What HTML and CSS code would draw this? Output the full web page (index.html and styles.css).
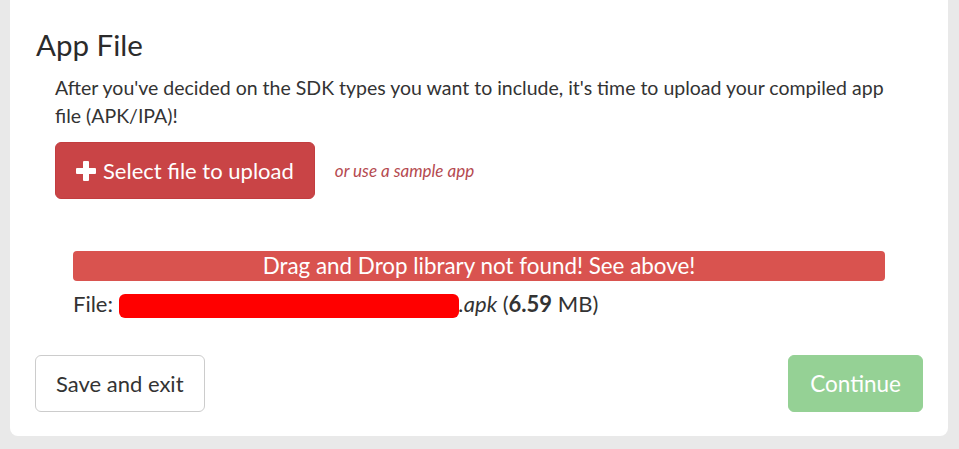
FILE: index.html
```html
<!DOCTYPE html>
<html lang="en">
<head>
<meta charset="UTF-8">
<meta name="viewport" content="width=device-width, initial-scale=1.0">
<title>App File</title>
<link rel="stylesheet" href="styles.css">
</head>
<body>
<div class="card">
    <!-- Upload step -->
    <h2 class="step-title">App File</h2>
    <div class="step-body">
        <p class="intro">After you've decided on the SDK types you want to include, it's time to upload your compiled app file (APK/IPA)!</p>
        <div class="upload-row">
            <button class="btn btn-upload" type="button">
                <svg class="icon-plus" viewBox="0 0 20 20" width="20" height="20">
                    <rect x="7" y="0" width="6" height="20" rx="1" fill="#fff"/>
                    <rect x="0" y="7" width="20" height="6" rx="1" fill="#fff"/>
                </svg>
                Select file to upload
            </button>
            <a class="sample-link" href="#">or use a sample app</a>
        </div>
        <div class="file-info">
            <div class="alert-bar">Drag and Drop library not found! See above!</div>
            <div class="file-name">File: <span class="redacted"></span><em>.apk</em> (<strong>6.59</strong> MB)</div>
        </div>
    </div>

    <!-- Footer buttons -->
    <div class="actions">
        <button class="btn btn-default" type="button">Save and exit</button>
        <button class="btn btn-continue" type="button" disabled>Continue</button>
    </div>
</div>
</body>
</html>
```

FILE: styles.css
```css
/* Page */
body {
    margin: 0;
    background-color: #e9e9e9;
    font-family: Lato, "Open Sans", sans-serif;
    color: #333;
}
.card {
    width: 886px;
    margin-left: 10px;
    padding: 24px 26px 24px 26px;
    background-color: #fff;
    border-radius: 0 0 8px 8px;
}
.step-title {
    margin: 0 0 8px 0;
    font-size: 29.5px;
    font-weight: 400;
    line-height: 42px;
    color: #2b2b2b;
}
/* Step content */
.step-body {
    padding-left: 19px;
}
.intro {
    margin: 0 10px 12px 0;
    font-size: 19.5px;
    line-height: 28px;
}
.upload-row {
    display: flex;
    align-items: center;
    gap: 20px;
}
.btn {
    font-family: inherit;
    border-radius: 6px;
    cursor: pointer;
    height: 57px;
}
.btn-upload {
    display: flex;
    align-items: center;
    gap: 7px;
    padding: 0 20px;
    background-color: #c94446;
    border: 1px solid #c23d3f;
    color: #fff;
    font-size: 22px;
}
.sample-link {
    color: #b54a50;
    font-style: italic;
    font-size: 17px;
    text-decoration: none;
}
.file-info {
    margin: 52px 37px 0 18px;
}
.alert-bar {
    background-color: #d9534f;
    color: #fff;
    font-size: 22.4px;
    line-height: 30px;
    text-align: center;
    border-radius: 4px;
}
.file-name {
    margin-top: 8px;
    font-size: 22px;
    line-height: 30px;
}
.file-name strong {
    font-weight: 700;
}
.redacted {
    display: inline-block;
    width: 340px;
    height: 24px;
    vertical-align: -6px;
    background-color: #ff0000;
    border-radius: 6px;
}
/* Footer */
.actions {
    display: flex;
    justify-content: space-between;
    margin: 36px -1px 0 -1px;
}
.btn-default {
    padding: 0 20px;
    background-color: #fff;
    border: 1px solid #ccc;
    color: #333;
    font-size: 22px;
}
.btn-continue {
    padding: 0 21px;
    background-color: #95d195;
    border: 1px solid #95d195;
    color: #fff;
    font-size: 22.5px;
    cursor: not-allowed;
}
```
